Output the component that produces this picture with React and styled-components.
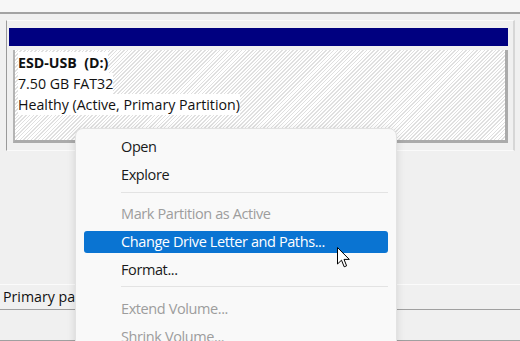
import React from "react";
import styled, { createGlobalStyle, css } from "styled-components";

const items = [
  { label: "Open" },
  { label: "Explore" },
  { sep: true, offset: 3 },
  { label: "Mark Partition as Active", disabled: true },
  { label: "Change Drive Letter and Paths...", active: true },
  { label: "Format..." },
  { sep: true, offset: 2 },
  { label: "Extend Volume...", disabled: true },
  { label: "Shrink Volume...", disabled: true },
];

const App = () => {
  return (
    <>
      <GlobalStyle />
      <Page>
        <TopStrip />
        <DiskArea>
          <NavyBar />
          <PartitionBox>
            <InfoLine bold>ESD-USB&nbsp;&nbsp;(D:)</InfoLine>
            <InfoLine>7.50 GB FAT32</InfoLine>
            <InfoLine>Healthy (Active, Primary Partition)</InfoLine>
          </PartitionBox>
        </DiskArea>
        <Legend>Primary partition</Legend>
        <LegendBelow />

        <Menu>
          {items.map((item, index) =>
            item.sep ? (
              <Separator key={index} offset={item.offset} />
            ) : (
              <MenuItem key={index}>
                <ItemInner active={item.active} disabled={item.disabled}>
                  {item.label}
                </ItemInner>
              </MenuItem>
            )
          )}
        </Menu>

        <Cursor width="14" height="22" viewBox="0 0 14 22">
          <path
            d="M0.5 0.5 L0.5 17 L4.5 13.2 L7.2 19.8 L9.6 18.8 L7 12.4 L12.3 12.4 Z"
            fill="#fff"
            stroke="#000"
            strokeWidth="1"
            strokeLinejoin="round"
          />
        </Cursor>
      </Page>
    </>
  );
};

const GlobalStyle = createGlobalStyle`
  html, body {
    margin: 0;
    padding: 0;
    background: #f0f0f0;
    overflow: hidden;
  }
  body {
    font-family: "Segoe UI", "Open Sans", "Noto Sans", sans-serif;
  }
`;

const Page = styled.div`
  position: relative;
  width: 520px;
  height: 341px;
  overflow: hidden;
  display: flex;
  flex-direction: column;
  background: #f0f0f0;
`;

const TopStrip = styled.div`
  height: 12px;
  flex-shrink: 0;
  background: #f7f7f7;
  border-bottom: 2px solid #a3a3a3;
`;

const DiskArea = styled.section`
  box-sizing: border-box;
  margin: 6px 0 0 6px;
  width: 509px;
  height: 131px;
  flex-shrink: 0;
  padding: 7px 0 0 2px;
  border-left: 1px solid #9a9a9a;
  border-top: 1px solid #fafafa;
  border-right: 2px solid #d6d6d6;
  border-bottom: 1px solid #fafafa;
  background: #f0f0f0;
`;

const NavyBar = styled.div`
  width: 499px;
  height: 18px;
  background: #000080;
`;

const PartitionBox = styled.div`
  box-sizing: border-box;
  margin: 4px 0 0 4px;
  width: 495px;
  height: 93px;
  padding: 2px 0 0 3px;
  border-left: 2px solid #b4b4b4;
  border-bottom: 3px solid #ababab;
  border-right: 3px solid #ababab;
  background: repeating-linear-gradient(
    135deg,
    #ffffff 0px,
    #ffffff 1.5px,
    #e0e0e0 1.5px,
    #e0e0e0 2.6px
  );
  background-color: #fff;
`;

const InfoLine = styled.div`
  width: fit-content;
  background: #fff;
  color: #111;
  font-size: 14.2px;
  line-height: 21px;
  letter-spacing: 0;
  ${(p) =>
    p.bold &&
    css`
      font-weight: 700;
    `}
`;

const Legend = styled.div`
  box-sizing: border-box;
  margin-top: 133px;
  height: 26px;
  flex-shrink: 0;
  padding-left: 3px;
  border-top: 1px solid #fbfbfb;
  border-bottom: 1px solid #a0a0a0;
  color: #111;
  font-size: 14.2px;
  line-height: 23px;
`;

const LegendBelow = styled.div`
  height: 30px;
  flex-shrink: 0;
  border-bottom: 1px solid #a0a0a0;
`;

const Menu = styled.ul`
  position: absolute;
  left: 75px;
  top: 128px;
  box-sizing: border-box;
  width: 322px;
  height: 240px;
  margin: 0;
  padding: 4px 8px 0 8px;
  list-style: none;
  background: #f9f9f9;
  border: 1px solid #e2e2e2;
  border-radius: 8px;
  box-shadow: 0 2px 8px rgba(0, 0, 0, 0.12);
`;

const MenuItem = styled.li`
  height: 28px;
  padding: 3px 0;
  box-sizing: border-box;
`;

const ItemInner = styled.div`
  height: 22px;
  border-radius: 3px;
  padding-left: 37px;
  font-size: 14.5px;
  line-height: 21px;
  letter-spacing: -0.4px;
  color: ${(p) => (p.disabled ? "#9d9d9d" : "#1a1a1a")};
  ${(p) =>
    p.active &&
    css`
      background: #0a74d2;
      color: #fff;
    `}
`;

const Separator = styled.li`
  height: 11px;
  box-sizing: border-box;
  padding-top: ${(p) => p.offset}px;
  margin-left: 37px;

  &::before {
    content: "";
    display: block;
    height: 1px;
    background: #e3e3e3;
  }
`;

const Cursor = styled.svg`
  position: absolute;
  left: 337px;
  top: 247px;
`;

export default App;
